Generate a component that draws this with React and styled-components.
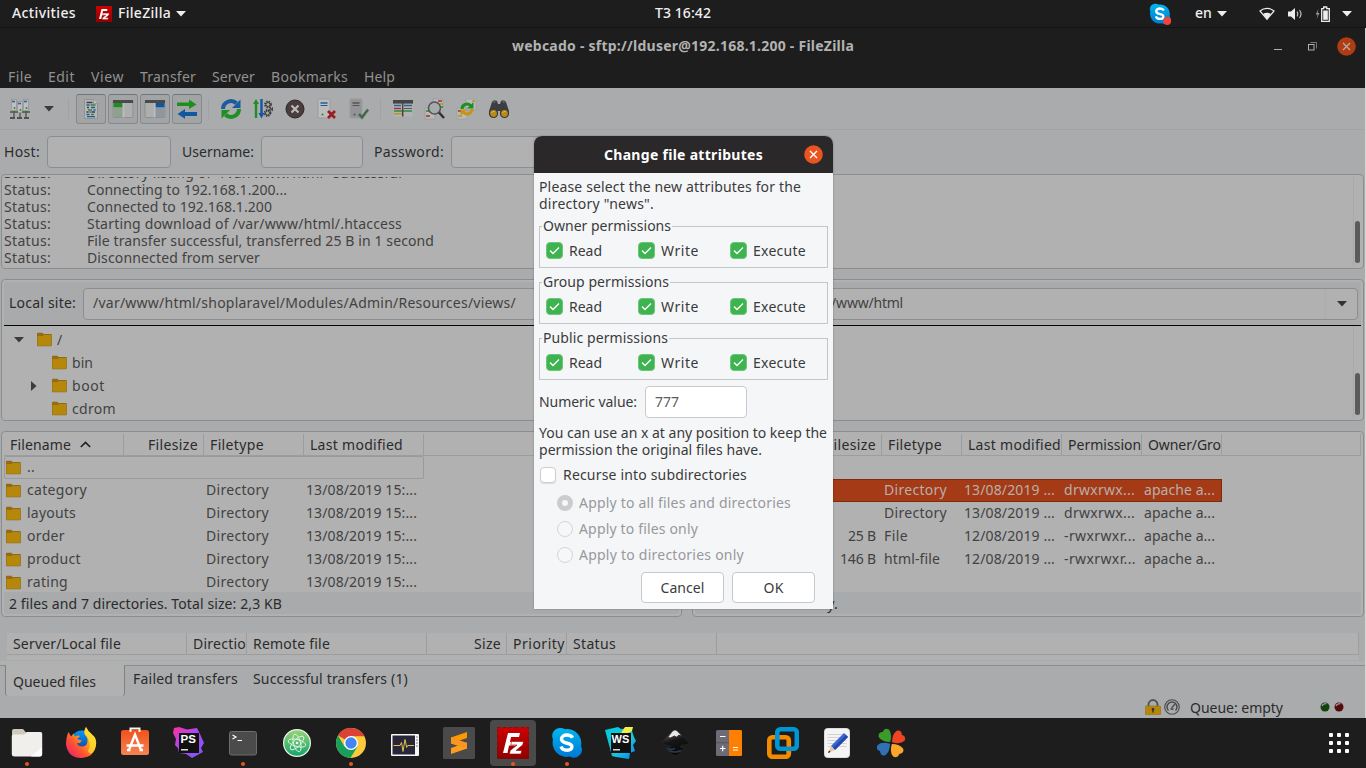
import React, { useLayoutEffect, useRef } from "react";
import styled, { createGlobalStyle, css } from "styled-components";

const c = {
  dark: "#1d1d1d",
  win: "#aaabac",
  field: "#b1b1b1",
  edge: "#8b8e91",
  soft: "#9c9d9e",
  label: "#2b2b2c",
  text: "#424242",
  accent: "#a53a16",
};

const Global = createGlobalStyle`
  * { box-sizing: border-box; }
  body { margin: 0; background: ${c.dark}; overflow: hidden; --rise: 1px; }
  body, button, input { font-family: "Noto Sans", "Open Sans", sans-serif; font-size: 14px; }
  svg { display: block; flex: none; }
`;

/* A run of text tracked so that it fills the given width.
   --rise lifts the baseline inside the 17px line. */
const Run = styled.span`
  display: inline-block;
  flex: none;
  align-self: ${(p) => p.$self || "auto"};
  justify-self: start;
  white-space: pre;
  line-height: calc(17px - 2 * var(--rise));
  padding-bottom: calc(2 * var(--rise));
`;
function Text({ w, self, children }) {
  const ref = useRef(null);
  useLayoutEffect(() => {
    const el = ref.current;
    el.style.letterSpacing = "0px";
    el.style.width = "max-content";
    const natural = el.getBoundingClientRect().width;
    el.style.letterSpacing = `${(w - natural) / String(children).length}px`;
    el.style.width = `${w}px`;
  }, [w, children]);
  return <Run ref={ref} $self={self}>{children}</Run>;
}

const Screen = styled.div`
  position: relative;
  width: 1366px;
  height: 768px;
  display: flex;
  flex-direction: column;
  overflow: hidden;
  background: ${c.dark};
`;

/* ---------- top bar ---------- */
const TopBar = styled.header`
  height: 28px;
  flex: none;
  display: flex;
  align-items: center;
  padding: 0 14px 0 12px;
  background: ${c.dark};
  border-bottom: 1px solid #131313;
  color: #f0f0f0;
  font-weight: 500;
`;
const TopGroup = styled.div`
  display: flex;
  align-items: center;
  flex: ${(p) => p.$grow || "1 1 0"};
  justify-content: ${(p) => p.$justify || "flex-start"};
`;
const Gap = styled.span`
  width: ${(p) => p.$w}px;
  flex: none;
`;
const Caret = ({ color = "#eeeeee", w = 10, h = 6 }) => (
  <svg width={w} height={h} viewBox="0 0 10 6"><path d="M0 0h10L5 5.6z" fill={color} /></svg>
);

const FzIcon = ({ size }) => (
  <svg width={size} height={size} viewBox="0 0 32 32">
    <defs><linearGradient id="fzg" x2="0" y2="1"><stop stopColor="#cc0202" /><stop offset="1" stopColor="#8e0000" /></linearGradient></defs>
    <rect width="32" height="32" fill="url(#fzg)" />
    <rect x=".5" y=".5" width="31" height="31" fill="none" stroke={size > 20 ? "#4a2020" : "#b00000"} strokeWidth="1" strokeDasharray="2 4" />
    <path d="M11 6h12l-1 4h-8l-1 5h7l-1 3.6h-7L10.500 26H6z" fill="#fff" />
    <path d="M14.500 14.500h12l-.7 3.300-6.800 5.700h5.700l-.8 3.500H12.500l.7-3.400 6.800-5.600h-6.200z" fill="#fff" stroke="#a80000" strokeWidth=".6" />
  </svg>
);
const SkypeIcon = ({ size, dot }) => (
  <svg width={size} height={size} viewBox="0 0 32 32">
    <defs><linearGradient id="skg" x2="0" y2="1"><stop stopColor="#00b7f0" /><stop offset="1" stopColor="#0078d4" /></linearGradient></defs>
    <path d="M9 1a8 8 0 0 0-7 11.500 14 14 0 0 0 16.800 17A8 8 0 0 0 30 19 14 14 0 0 0 14 2.300 8 8 0 0 0 9 1z" fill="url(#skg)" />
    <path d="M21.500 10.800c-1-2-3-2.800-5.600-2.800-3 0-5.400 1.400-5.400 4 0 5.600 10.400 3 10.400 7.600 0 2.200-2 3.600-4.900 3.600-3 0-5.200-1.200-6-3.700" fill="none" stroke="#fff" strokeWidth="3.400" />
    {dot && <circle cx="26.500" cy="26" r="6" fill="#f04438" />}
  </svg>
);
const WifiIcon = () => (
  <svg width="16" height="14" viewBox="0 0 16 14">
    <path d="M1 4C5 .5 11 .5 15 4L8 12.300z" fill="none" stroke="#ececec" strokeWidth="1.200" />
    <path d="M4 7c2.400-1.800 5.600-1.800 8 0l-4 5.300z" fill="#ececec" />
  </svg>
);
const VolumeIcon = () => (
  <svg width="16" height="14" viewBox="0 0 16 14">
    <path d="M1 4.500h3L8 1v12L4 9.500H1z" fill="#ececec" />
    <path d="M10 4.700q1.600 2.300 0 4.600M12.500 3q3 4 0 8" fill="none" stroke="#bdbdbd" strokeWidth="1.200" />
  </svg>
);
const BatteryIcon = () => (
  <svg width="16" height="16" viewBox="0 0 16 16">
    <path d="M3.500 3L.7 8.500h2L1.600 13 4.500 7H2.600z" fill="#9a9a9a" />
    <path d="M6.700 2.700h2V1h3v1.700h2.600v12.600H6.700z" fill="none" stroke="#ececec" strokeWidth="1.300" />
    <rect x="8.200" y="4.500" width="4.600" height="9.300" fill="#ececec" />
  </svg>
);

/* ---------- window ---------- */
const Window = styled.main`
  height: 690px;
  flex: none;
  display: flex;
  flex-direction: column;
  background: ${c.win};
  border-right: 1px solid #d6d6d6;
`;
const TitleBar = styled.div`
  height: 36px;
  flex: none;
  display: flex;
  align-items: center;
  padding: 0 9px 0 512px;
  background: ${c.dark};
  color: #b2b2b2;
  font-weight: 700;
`;
const WindowButtons = styled.div`
  margin-left: auto;
  display: flex;
  align-items: center;
`;
const MenuBar = styled.nav`
  height: 24px;
  flex: none;
  display: flex;
  align-items: center;
  gap: 16px;
  padding: 2px 8px 0;
  background: ${c.dark};
  color: #919191;
`;
const Toolbar = styled.div`
  height: 42px;
  flex: none;
  display: flex;
  align-items: center;
  padding-left: 9px;
  border-bottom: 1px solid #a2a3a5;
`;
const ToolSlot = styled.span`
  width: 32px;
  height: 32px;
  flex: none;
  display: flex;
  align-items: center;
  justify-content: center;
`;
const Toggle = styled.button`
  width: 30px;
  height: 30px;
  margin: 0 1px;
  padding: 0;
  flex: none;
  display: flex;
  align-items: center;
  justify-content: center;
  background: #a3a4a6;
  border: 1px solid #868a8e;
  border-top-color: #6f777d;
  border-radius: 3px;
`;
const Divider = styled.span`
  width: 1px;
  height: 20px;
  margin: 0 ${(p) => p.$r}px 0 ${(p) => p.$l}px;
  background: #a1a2a3;
`;
const Quick = styled.div`
  height: 44px;
  flex: none;
  display: flex;
  align-items: center;
  padding-left: 4px;
  color: ${c.label};
`;
const Field = styled.div`
  width: ${(p) => p.$w}px;
  height: 32px;
  margin: 0 ${(p) => p.$r || 0}px 0 ${(p) => p.$l}px;
  flex: none;
  background: ${c.field};
  border: 1px solid ${c.edge};
  border-radius: 4px;
`;
const Panel = styled.section`
  height: ${(p) => p.$h}px;
  min-width: 0;
  width: ${(p) => (p.$w ? `${p.$w}px` : "auto")};
  flex: none;
  display: flex;
  flex-direction: column;
  padding: 2px;
  border: 1px solid ${c.edge};
  border-radius: 4px;
  background: ${c.field};
`;
const LogPanel = styled(Panel)`
  margin-bottom: 10px;
  --rise: 0px;
`;
const LogBody = styled.div`
  flex: 1;
  min-height: 0;
  display: flex;
  justify-content: space-between;
  overflow: hidden;
  color: ${c.text};
`;
const LogLines = styled.div`
  display: flex;
  flex-direction: column;
  justify-content: flex-end;
`;
const LogLine = styled.div`
  height: 17px;
  flex: none;
  display: grid;
  grid-template-columns: 83px auto;
`;
const ScrollTrack = styled.div`
  width: 8px;
  height: 100%;
  display: flex;
  flex-direction: column;
  justify-content: flex-end;
  align-items: center;
  padding-bottom: 3px;
  border-left: 1px solid #a8a8a8;
`;
const ScrollThumb = styled.span`
  width: 5px;
  height: 42px;
  border-radius: 3px;
  background: #5b5b5b;
`;
const Split = styled.div`
  display: flex;
  gap: 10px;
  margin-bottom: 10px;
`;
const Content = styled.div`
  display: flex;
  flex-direction: column;
  flex: none;
  padding: 0 1px;
`;
const SiteBar = styled.div`
  height: 43px;
  flex: none;
  display: flex;
  align-items: center;
  padding: 0 3px 0 5px;
  background: #a9aaab;
  color: ${c.label};
`;
const Combo = styled.div`
  height: 32px;
  flex: 1;
  margin-left: 7px;
  padding-left: ${(p) => p.$pad}px;
  display: flex;
  align-items: center;
  justify-content: space-between;
  background: ${c.field};
  border: 1px solid ${c.edge};
  border-radius: 4px;
  color: ${c.text};
`;
const ComboButton = styled.span`
  width: 32px;
  height: 30px;
  display: flex;
  align-items: center;
  justify-content: center;
  border-left: 1px solid #acadad;
`;
const Tree = styled.div`
  flex: 1;
  min-height: 0;
  display: flex;
  justify-content: space-between;
  border-top: 1px solid #050505;
  color: ${c.text};
  --rise: 0px;
`;
const TreeRows = styled.div`
  padding-top: 2px;
`;
const TreeRow = styled.div`
  height: 23px;
  display: flex;
  align-items: center;
  gap: 5px;
  padding-left: ${(p) => p.$indent}px;
`;
const Twist = styled.span`
  width: 12px;
  margin-right: 7px;
  display: flex;
  justify-content: center;
`;
const Head = styled.div`
  height: 22px;
  flex: none;
  display: flex;
  border-bottom: 1px solid ${c.soft};
  color: ${c.label};
  --rise: 0px;
`;
const HeadCell = styled.div`
  width: ${(p) => p.$w}px;
  flex: none;
  display: flex;
  align-items: center;
  gap: 9px;
  justify-content: ${(p) => (p.$right ? "flex-end" : "flex-start")};
  padding: 0 ${(p) => (p.$right ? 5 : 0)}px 0 6px;
  overflow: hidden;
  border-right: 1px solid ${c.soft};
`;
const HeadFill = styled.div`
  flex: 1;
  border-right: 1px solid ${c.soft};
`;
const Rows = styled.div`
  flex: 1;
  min-height: 0;
  overflow: hidden;
`;
const Row = styled.div`
  width: ${(p) => p.$w}px;
  height: 23px;
  display: flex;
  align-items: center;
  color: ${c.text};
  ${(p) => p.$focus && css`box-shadow: inset 0 0 0 1px #9a9a9a; border-radius: 2px;`}
  ${(p) => p.$selected && css`background: ${c.accent}; color: #b7afab; box-shadow: inset 0 0 0 1px #7e2a10;`}
`;
const Cell = styled.div`
  width: ${(p) => p.$w}px;
  flex: none;
  display: flex;
  align-items: center;
  gap: 6px;
  justify-content: ${(p) => (p.$right ? "flex-end" : "flex-start")};
  padding: 0 ${(p) => (p.$right ? 6 : 0)}px 0 2px;
`;
const PanelStatus = styled.div`
  height: 22px;
  flex: none;
  display: flex;
  align-items: center;
  padding: 2px 0 0 5px;
  background: #a9aaab;
  color: ${c.label};
`;
const Queue = styled.section`
  height: 33px;
  margin-top: 6px;
  flex: none;
  display: flex;
  flex-direction: column;
  border-bottom: 1px solid ${c.edge};
  box-shadow: inset 0 -4px #afb0b0;
`;
const QueueList = styled.div`
  height: 27px;
  margin: 0 6px 0 7px;
  background: ${c.field};
`;
const Tabs = styled.div`
  height: 31px;
  flex: none;
  display: flex;
  align-items: flex-start;
  padding-left: 5px;
  margin-top: -1px;
  color: ${c.label};
`;
const ActiveTab = styled.div`
  width: 120px;
  height: 31px;
  display: flex;
  align-items: center;
  padding: 4px 0 0 7px;
  background: ${c.field};
  border: solid #7d8084;
  border-width: 0 1px;
  border-radius: 0 0 3px 3px;
`;
const Tab = styled.div`
  padding: 4px 0 0 ${(p) => p.$l}px;
`;
const StatusBar = styled.footer`
  height: 20px;
  margin-top: 1px;
  flex: none;
  display: flex;
  align-items: center;
  padding-left: 1145px;
  color: ${c.label};
  --rise: 0px;
`;

const Folder = () => (
  <svg width="15" height="15" viewBox="0 0 15 15">
    <path d="M0 1.500Q0 .8.700.8h4.600l1.200 1.200H14q.8 0 .8.800v10.600q0 .8-.8.800H.8q-.8 0-.8-.8z" fill="#8a6a1c" />
    <path d="M.500 4h5l1.300-1H14.300v10.200q0 .5-.5.500H1q-.5 0-.5-.5z" fill="#b5880b" />
    <path d="M.500 1.500h4.700l1.200 1.200-1.100.9H.5z" fill="#9c6c0c" />
  </svg>
);

/* ---------- toolbar drawings ---------- */
const SiteManagerIcon = () => (
  <svg width="22" height="22" viewBox="0 0 22 22">
    {[[2, 1], [8, 3], [14, 1]].map(([x, y]) => (
      <g key={x}>
        <rect x={x + 0.3} y={y + 0.3} width="5" height="11" fill="#bfbfbf" stroke="#8f9091" strokeWidth=".7" />
        <path d={`M${x + 1} ${y + 2.500}h3`} stroke="#2f66a3" strokeWidth="1.700" />
      </g>
    ))}
    <circle cx="5.500" cy="10" r=".9" fill="#2f8034" /><circle cx="11.500" cy="12" r=".9" fill="#2f8034" /><circle cx="17.500" cy="10" r=".9" fill="#2f8034" />
    <path d="M5 13v6M11 15v4M17 13v6" stroke="#4a4a4a" strokeWidth="1.200" />
    <path d="M1 14h8M13 14h8" stroke="#3f5f42" strokeWidth="1.300" />
    <path d="M1 20h5M8 20h5M15 20h5" stroke="#333" strokeWidth="1.700" />
  </svg>
);
const LogIcon = () => (
  <svg width="20" height="22" viewBox="0 0 20 22">
    <path d="M3.500 1.500h9l4 4v15h-13z" fill="#b5b6b7" stroke="#929394" />
    <path d="M12.500 1.500v4h4" fill="#c7c7c7" stroke="#969798" />
    <path d="M5.500 4.500h6M6 9.500h2M11 14h3M5.500 14h2" stroke="#3e3e3e" strokeWidth="1.400" />
    <path d="M5.500 7h3M10 9.500h4M5.500 16.500h3" stroke="#235c95" strokeWidth="1.400" />
    <path d="M9.500 7h5M7 12h4M10 16.500h3" stroke="#39833d" strokeWidth="1.400" />
    <path d="M12 12h3M8 14h3M6 18.700h8" stroke="#235c95" strokeWidth="1.200" />
  </svg>
);
const PaneIcon = ({ flip }) => (
  <svg width="22" height="20" viewBox="0 0 22 20">
    <g transform={flip ? "translate(22 0) scale(-1 1)" : undefined}>
      <rect x="1" y="1.500" width="20" height="17" rx="1" fill="#adaeae" stroke="#8e8f90" />
      <path d="M1 1h20v3H1z" fill="#4b4b4b" />
      <path d="M1.500 4h9v4.500h-9z" fill={flip ? "#10549b" : "#1f8d1f"} />
      <path d="M1.500 8.500h9V18h-9z" fill={flip ? "#8d979f" : "#8ea08e"} />
      <path d="M11.500 4v14.500" stroke="#bcbcbc" strokeWidth="1.600" />
    </g>
  </svg>
);
const QueueIcon = () => (
  <svg width="20" height="20" viewBox="0 0 20 20">
    <path d="M0 3.500h12V.500L19.500 5.500 12 10V7H0z" fill="#1c901c" />
    <path d="M20 13H8V10L.5 15 8 19.700V17h12z" fill="#1258a0" />
  </svg>
);
const RefreshIcon = () => (
  <svg width="22" height="22" viewBox="0 0 22 22">
    <path d="M3 11a8 8 0 0 1 13.500-5.700" fill="none" stroke="#1c5b9f" strokeWidth="4" />
    <path d="M20.500 1.500V10H12z" fill="#1c5b9f" />
    <path d="M19 11a8 8 0 0 1-13.500 5.700" fill="none" stroke="#1d8f24" strokeWidth="4" />
    <path d="M1.500 20.500V12H10z" fill="#1d8f24" />
  </svg>
);
const Gear = ({ x, y, r }) => (
  <g stroke="#404040" fill="none">
    <circle cx={x} cy={y} r={r} strokeWidth="1.800" strokeDasharray="1.500 .9" />
    <circle cx={x} cy={y} r={r - 1} strokeWidth="1" />
  </g>
);
const ProcessIcon = () => (
  <svg width="20" height="22" viewBox="0 0 20 22">
    <path d="M1.800 20V6H0l3-5 3 5H4.200v14z" fill="#1d8f24" />
    <path d="M7.300 1v14H5.500l3 5.500 3-5.500H9.700V1z" fill="#14579f" />
    <Gear x={15} y={6.500} r={3} />
    <Gear x={14.500} y={15} r={3} />
    <Gear x={18} y={11} r={1.500} />
  </svg>
);
const CancelIcon = () => (
  <svg width="20" height="20" viewBox="0 0 20 20">
    <circle cx="10" cy="10" r="9" fill="#4a3c3d" stroke="#2c2828" />
    <path d="M6.500 6.500l7 7m0-7l-7 7" stroke="#bdb9b9" strokeWidth="2.200" />
  </svg>
);
const ServerIcon = ({ ok }) => (
  <svg width="22" height="22" viewBox="0 0 22 22">
    <rect x="2" y="1" width="12" height="19" rx="1" fill={ok ? "#929495" : "#bcbdbd"} stroke="#9b9c9d" />
    <path d="M4.500 5h7" stroke={ok ? "#555" : "#235c9b"} strokeWidth="1.500" />
    <path d="M4.500 7.500h7" stroke={ok ? "#555" : "#235c9b"} />
    <circle cx="6.500" cy="16.500" r="1" fill={ok ? "#555" : "#2f7e32"} />
    {ok ? <path d="M11 16l3 3.500 6-8" fill="none" stroke="#436848" strokeWidth="2.600" />
      : <path d="M12 13l7 7m0-7l-7 7" stroke="#9a1b24" strokeWidth="2.700" />}
  </svg>
);
const FilterIcon = () => (
  <svg width="20" height="17" viewBox="0 0 20 17">
    <rect x=".5" y=".5" width="19" height="16" fill="#b3b3b3" />
    <path d="M0 1.800h20" stroke="#444" strokeWidth="3.600" />
    <path d="M1 5.500h7M11 5.500h8" stroke="#2d609d" strokeWidth="1.300" />
    <path d="M1 8.500h7" stroke="#a72c2c" strokeWidth="1.400" /><path d="M11 8.500h8" stroke="#555" />
    <path d="M1 11h18" stroke="#318841" strokeWidth="1.500" />
    <path d="M1 13.800h8" stroke="#bb9825" strokeWidth="1.500" />
    <path d="M9.700 3v13.500" stroke="#444" strokeWidth="1.500" />
  </svg>
);
const CompareIcon = () => (
  <svg width="22" height="22" viewBox="0 0 22 22">
    <path d="M9 1h10v12H9zM1 10h10v11H1z" fill="#b9b9b9" stroke="#969696" strokeWidth=".6" />
    <path d="M14 3h4" stroke="#a52e2e" strokeWidth="1.500" /><path d="M15 9h4M2 13h3" stroke="#1d8f24" strokeWidth="1.500" />
    <path d="M16 6h3" stroke="#bd9320" strokeWidth="1.500" /><path d="M2 18h4" stroke="#a52e2e" strokeWidth="1.500" />
    <circle cx="10.500" cy="10" r="6" fill="#a8abad" stroke="#555" strokeWidth="1.600" />
    <path d="M15 14.500l5 5.500" stroke="#333" strokeWidth="2.600" />
  </svg>
);
const SyncIcon = () => (
  <svg width="22" height="22" viewBox="0 0 22 22">
    <path d="M10 1h10v11H10zM1 10h10v11H1z" fill="#b9b9b9" stroke="#999" strokeWidth=".6" />
    <path d="M2 13h3" stroke="#a52e2e" strokeWidth="1.500" /><path d="M2 18h4M16 3h3" stroke="#bd9320" strokeWidth="1.500" />
    <path d="M6 11a5 5 0 0 1 8.500-3.500" fill="none" stroke="#1d8f24" strokeWidth="3" /><path d="M17.500 4v6.500H11z" fill="#1d8f24" />
    <path d="M16 11a5 5 0 0 1-8.500 3.500" fill="none" stroke="#c59411" strokeWidth="3" /><path d="M4.500 18v-6.500H11z" fill="#c59411" />
  </svg>
);
const BinocularsIcon = () => (
  <svg width="22" height="20" viewBox="0 0 22 20">
    <path d="M4 3q2-3 5-1l1 3h2l1-3q3-2 5 1l3 9v4h-8l-1-4h-2l-1 4H1v-4z" fill="#3c3f41" />
    <path d="M5.500 3.500l1.800-1M16.500 3.500l-1.800-1" stroke="#85898b" />
    <circle cx="5.500" cy="14.500" r="4" fill="#b98a16" stroke="#37393a" strokeWidth="1.200" />
    <circle cx="16.500" cy="14.500" r="4" fill="#b98a16" stroke="#37393a" strokeWidth="1.200" />
    <path d="M3.500 14q1-2 3-1.500M14.500 14q1-2 3-1.500" fill="none" stroke="#d8b966" />
  </svg>
);
const CloseIcon = ({ size, bg, fg }) => (
  <svg width={size} height={size} viewBox="0 0 19 19">
    <circle cx="9.500" cy="9.500" r="9.300" fill={bg} />
    <path d="M6 6l7 7m0-7l-7 7" stroke={fg} strokeWidth="1.400" />
  </svg>
);

/* ---------- dialog ---------- */
const Dialog = styled.div`
  position: absolute;
  left: 534px;
  top: 136px;
  width: 299px;
  height: 473px;
  display: flex;
  flex-direction: column;
  border-radius: 8px 8px 0 0;
  overflow: hidden;
  background: #f5f6f8;
  color: #3b3b3b;
  box-shadow: 0 0 2px rgba(0, 0, 0, 0.35);
`;
const DialogTitle = styled.div`
  height: 37px;
  flex: none;
  display: flex;
  align-items: center;
  justify-content: space-between;
  padding: 0 10px 0 70px;
  background: #2b2829;
  color: #ffffff;
  font-weight: 700;
  --rise: 0px;
`;
const DialogBody = styled.div`
  display: flex;
  flex-direction: column;
  padding: 6px 5px 0;
`;
const Paragraph = styled.div`
  display: flex;
  flex-direction: column;
  height: 34px;
`;
const Group = styled.fieldset`
  height: 50px;
  margin: 5px 0 1px;
  padding: 0;
  min-width: 0;
  border: 1px solid #c2c5ca;
  display: block;
`;
const Legend = styled.legend`
  height: 17px;
  margin-left: 2px;
  padding: 0 1px;
  line-height: 15px;
  --rise: 2px;
`;
const Checks = styled.div`
  display: grid;
  grid-template-columns: repeat(3, 92px);
  padding: 7px 0 0 6px;
  --rise: 0px;
`;
const Check = styled.label`
  display: flex;
  align-items: center;
  gap: 6px;
  height: 17px;
`;
const Tick = () => (
  <svg width="17" height="17" viewBox="0 0 17 17">
    <rect x=".5" y=".5" width="16" height="16" rx="3.500" fill="#3eb34f" stroke="#6cc67a" />
    <path d="M4 8.500l3 3 6-6" fill="none" stroke="#fff" strokeWidth="1.300" />
  </svg>
);
const NumericRow = styled.div`
  height: 32px;
  margin: 5px 0 7px;
  display: flex;
  align-items: center;
  gap: 8px;
`;
const NumericInput = styled.div`
  width: 102px;
  height: 32px;
  display: flex;
  align-items: center;
  padding-left: 9px;
  border: 1px solid #c7c9cd;
  border-radius: 4px;
  background: #ffffff;
  color: #5c5c5c;
`;
const EmptyBox = styled.span`
  width: 16px;
  height: 16px;
  border: 1px solid #cfcfcf;
  border-radius: 4px;
  background: #ffffff;
  box-shadow: 0 1px 1px #dddddd;
`;
const RecurseRow = styled.label`
  height: 17px;
  margin: 8px 0 6px 1px;
  display: flex;
  align-items: flex-start;
  gap: 7px;
`;
const RadioRow = styled.label`
  height: 26px;
  display: flex;
  align-items: center;
  gap: 6px;
  padding-left: 18px;
  color: #98999b;
`;
const Radio = styled.span`
  width: 16px;
  height: 16px;
  border-radius: 50%;
  border: ${(p) => (p.$on ? "5px solid #cbccce" : "1px solid #d3d5d7")};
  background: #f6f7f8;
`;
const Buttons = styled.div`
  display: flex;
  gap: 8px;
  margin: 4px 0 0 102px;
  --rise: 0px;
`;
const Button = styled.button`
  width: 83px;
  height: 31px;
  padding: 0;
  display: flex;
  align-items: center;
  justify-content: center;
  border: 1px solid #c6c8cc;
  border-radius: 4px;
  background: #ffffff;
  color: #3b3b3b;
`;

/* ---------- dock ---------- */
const Dock = styled.footer`
  height: 50px;
  flex: none;
  display: flex;
  align-items: stretch;
  background: ${c.dark};
`;
const DockItem = styled.div`
  width: 54px;
  display: flex;
  flex-direction: column;
  align-items: center;
  position: relative;
`;
const DockTile = styled.div`
  width: 46px;
  height: 46px;
  margin-top: 2px;
  flex: none;
  display: flex;
  align-items: center;
  justify-content: center;
  border-radius: 4px;
  background: ${(p) => (p.$active ? "#4a4a4a" : "transparent")};
`;
const RunDot = styled.span`
  position: absolute;
  bottom: 2px;
  width: 4px;
  height: 4px;
  border-radius: 50%;
  background: #ea5424;
`;
const AppsButton = styled.div`
  margin-left: auto;
  padding-right: 17px;
  display: flex;
  align-items: center;
`;

const FilesApp = () => (
  <svg width="32" height="32" viewBox="0 0 32 32">
    <path d="M1 4q0-2 2-2h9l3 3.500h14q2 0 2 2V12H1z" fill="#cfc9bd" />
    <path d="M.800 9q0-1.600 1.600-1.600H13L16 5h13.500q1.700 0 1.700 1.800V27q0 2.500-2.500 2.500h-25Q.8 29.500.8 27z" fill="#f0efec" />
    <path d="M31 20v7q0 2.500-2.500 2.500H20z" fill="#fcfcfb" />
  </svg>
);
const FirefoxApp = () => (
  <svg width="32" height="32" viewBox="0 0 32 32">
    <defs>
      <linearGradient id="ffa" x1="1" x2="0" y1="0" y2="1"><stop stopColor="#fff44f" /><stop offset=".35" stopColor="#ffb01c" /><stop offset=".65" stopColor="#ff5034" /><stop offset="1" stopColor="#e5157d" /></linearGradient>
      <linearGradient id="ffb" x2="0" y2="1"><stop stopColor="#009bf5" /><stop offset="1" stopColor="#21308e" /></linearGradient>
    </defs>
    <circle cx="17" cy="15" r="11.500" fill="url(#ffb)" />
    <path d="M3.500 5l2.500 4.500 2.500-3 1.500 3q3-1.500 5-.5l-3 3q3 1.500 5 1l-2 3h-3q1 4 6 3.500 4-.5 4.500-5 .5-5-3-7.500Q18.500 4 21 0q2 4.500 6 7.500 5 4 4 10.500-1.500 12-14.500 13Q3 31 1 17.500 1 10 3.500 5z" fill="url(#ffa)" />
    <path d="M21 0q2 4.500 6 7.500 5 4 4 10.500-1 5-4 8Q24 27 23 24q3-5 1-11-1.500-3-4-5-1-4 1-8z" fill="#ffdf2f" opacity=".75" />
  </svg>
);
const SoftwareApp = () => (
  <svg width="32" height="32" viewBox="0 0 32 32">
    <defs><linearGradient id="swg" x2="0" y2="1"><stop stopColor="#f1511b" /><stop offset="1" stopColor="#f58453" /></linearGradient></defs>
    <rect x="2" y="3" width="28" height="25" rx="2.500" fill="url(#swg)" />
    <path d="M11.500 5V1.500h9V5" fill="none" stroke="#fff3ea" strokeWidth="2" />
    <path d="M10 23l6-15.500L22 23M7.500 18.500h17M8 23h3.500M20.500 23H24" fill="none" stroke="#fff" strokeWidth="2.400" />
  </svg>
);
const IdeText = styled.text`
  font-family: "Liberation Sans", sans-serif;
  font-weight: 700;
  font-size: ${(p) => p.$size}px;
  fill: #ffffff;
`;
const PhpStormApp = () => (
  <svg width="34" height="34" viewBox="0 0 34 34">
    <defs><linearGradient id="psg" x2="1" y2="1"><stop stopColor="#ff318c" /><stop offset=".4" stopColor="#b345f1" /><stop offset="1" stopColor="#765af8" /></linearGradient></defs>
    <path d="M2 2l5-1 8 2.500L25 2l3 6 4 9-3 5 2 4-11 6-6-4-7-1-1-5-3-3 1-6-3-6z" fill="url(#psg)" />
    <rect x="7" y="7" width="20" height="20" fill="#111" />
    <IdeText x="8.500" y="17" $size={11.500}>PS</IdeText><path d="M9 23.800h7" stroke="#fff" strokeWidth="1.300" />
  </svg>
);
const WebStormApp = () => (
  <svg width="34" height="34" viewBox="0 0 34 34">
    <defs><linearGradient id="wsg" x2="1" y2="1"><stop stopColor="#00cdd7" /><stop offset=".6" stopColor="#18c5dc" /><stop offset="1" stopColor="#087cfa" /></linearGradient></defs>
    <path d="M1 4L14 1l3 2 10-1 3 9 2 4-3 4 2 6-5 2-1 6-13-2-4-1z" fill="url(#wsg)" />
    <path d="M17 7l4-6h8l-1 4-4 2z" fill="#f7ee45" />
    <rect x="7" y="7" width="20" height="20" fill="#111" />
    <IdeText x="7.500" y="16.800" $size={11}>WS</IdeText><path d="M9 23.800h7" stroke="#fff" strokeWidth="1.300" />
  </svg>
);
const TerminalApp = () => (
  <svg width="30" height="30" viewBox="0 0 30 30">
    <rect x="1.500" y="3.500" width="27" height="23.500" rx="2" fill="#4b4b4b" stroke="#6d6d6d" />
    <path d="M4.500 7l3.500 2-3.500 2M9.500 12.500h4.500" fill="none" stroke="#fff" strokeWidth="1.200" />
  </svg>
);
const AtomApp = () => (
  <svg width="30" height="30" viewBox="0 0 30 30">
    <defs><linearGradient id="atg" x2="0" y2="1"><stop stopColor="#9bd577" /><stop offset="1" stopColor="#12a36f" /></linearGradient></defs>
    <circle cx="15" cy="15" r="13.400" fill="url(#atg)" stroke="#e6f4e5" strokeWidth="1.200" />
    <g fill="none" stroke="#e6f8e6" strokeWidth=".9">
      <ellipse cx="15" cy="15" rx="9" ry="3.500" transform="rotate(15 15 15)" />
      <ellipse cx="15" cy="15" rx="9" ry="3.500" transform="rotate(75 15 15)" />
      <ellipse cx="15" cy="15" rx="9" ry="3.500" transform="rotate(135 15 15)" />
    </g>
    <circle cx="15" cy="15" r="1.300" fill="#fff" />
  </svg>
);
const ChromeApp = () => (
  <svg width="32" height="32" viewBox="0 0 32 32">
    <circle cx="16" cy="16" r="15" fill="#fccb3c" />
    <path d="M16 16L3 8.500A15 15 0 0 1 29.500 9.200H16z" fill="#d94335" />
    <path d="M3 8.500A15 15 0 0 0 15.500 31L22.500 19.500 9.500 19.500z" fill="#17a05d" />
    <circle cx="16" cy="16" r="7" fill="#fff" /><circle cx="16" cy="16" r="5.700" fill="#4285f4" />
  </svg>
);
const MonitorApp = () => (
  <svg width="30" height="30" viewBox="0 0 30 30">
    <rect x="1" y="6" width="28" height="22" rx="1" fill="#f6f6f8" />
    <rect x="2.500" y="7.500" width="22.500" height="19" fill="#29263a" />
    <path d="M3.500 17.500H10l1.500-3 1.500 9 2-12 1.700 8 1-2H24" fill="none" stroke="#d9c34b" strokeWidth="1" />
    <path d="M27 8v11" stroke="#999" strokeWidth="1.300" strokeDasharray="2 1" />
  </svg>
);
const SublimeApp = () => (
  <svg width="32" height="32" viewBox="0 0 32 32">
    <rect width="32" height="32" rx="1.500" fill="#4a4a4a" />
    <path d="M24 5v6L8 16.500V10.500z" fill="#ff9800" />
    <path d="M8 10.500L24 16v6L8 16.500z" fill="#e27a08" />
    <path d="M24 15.500v6L8 27v-6z" fill="#ff9d1f" />
    <path d="M8 10.500v6l16 5v-5.500z" fill="#f99522" />
  </svg>
);
const InkscapeApp = () => (
  <svg width="30" height="30" viewBox="0 0 30 30">
    <defs><linearGradient id="ink" x2=".3" y2="1"><stop stopColor="#777" /><stop offset=".5" stopColor="#161616" /><stop offset="1" stopColor="#0a0a0a" /></linearGradient></defs>
    <path d="M15 2q1.500 0 3 1.500L28 13.500q1.500 2-1 3l-6 1q-2 1 0 1.700l4 1.300-4 2q-1 4-5 5-5-.5-5-3.500l-5-3q1-2 5-2.500l-7-2q-3-1.500-1-3.500L12 3.500Q13.500 2 15 2z" fill="url(#ink)" stroke="#2c2c2c" strokeWidth=".5" />
    <path d="M15 2.500q1.500 0 2.500 1.200L21 7.200l-2.500-.4-1.700 2-2.500-1.300-3.800 2L8.500 9l4-5.300q1-1.200 2.500-1.200z" fill="#e9e9e9" />
    <path d="M9 22.500q6 3 12 0M7 20.500q4 1.500 8 0" stroke="#2c3a49" fill="none" strokeWidth="1.500" />
  </svg>
);
const CalcApp = () => (
  <svg width="26" height="26" viewBox="0 0 26 26">
    <rect width="26" height="26" rx="1.500" fill="#6d6b76" />
    <path d="M13 0h11.500Q26 0 26 1.500v23q0 1.500-1.500 1.500H13z" fill="#ff7f02" />
    <path d="M0 12.800h13" stroke="#555" /><path d="M4 6.500h5.500M4 18.500h5.500M6.700 15.800v5.500M17 17.500h5M17 20h5" stroke="#fff" strokeWidth="1.200" />
  </svg>
);
const VmwareApp = () => (
  <svg width="32" height="32" viewBox="0 0 32 32" fill="none" strokeWidth="4.600">
    <rect x="2.300" y="10.300" width="19.500" height="19.500" rx="3" stroke="#f38b00" />
    <rect x="10.300" y="2.300" width="19.500" height="19.500" rx="3" stroke="#0095d3" />
    <path d="M21.800 24v2" stroke="#f38b00" />
  </svg>
);
const EditorApp = () => (
  <svg width="26" height="30" viewBox="0 0 26 30">
    <rect x=".5" y=".5" width="25" height="29" rx="3" fill="#f4f4f5" stroke="#ddd" />
    <path d="M3.500 6.500h19M3.500 9.500h19M3.500 12.500h19M3.500 15.500h19M3.500 18.500h19" stroke="#d2d2d6" />
    <path d="M20 5l4 4L11 22l-4-4z" fill="#3566d6" /><path d="M22 7l2 2L11 22l-2-2z" fill="#2447a8" />
    <path d="M7 18l4 4-7 3z" fill="#e7c6a0" /><path d="M5 22.500l1.700 1.600L4 25z" fill="#222" />
  </svg>
);
const petal = "M14 14.200Q6 15.500 2 11.500 0 7 5 5.700 6 .8 10.500 2 15 5.500 14 14.200z";
const CloverApp = () => (
  <svg width="30" height="30" viewBox="0 0 30 30">
    <g transform="rotate(10 15 15)">
      <path d={petal} fill="#3a9b2b" />
      <path d={petal} fill="#ee4423" transform="rotate(90 15 15)" />
      <path d={petal} fill="#f9a72b" transform="rotate(180 15 15)" />
      <path d={petal} fill="#3070b5" transform="rotate(270 15 15)" />
    </g>
  </svg>
);
const GridIcon = () => (
  <svg width="20" height="20" viewBox="0 0 20 20" fill="#fff">
    {[0, 8, 16].flatMap((y) => [0, 8, 16].map((x) => <rect key={`${x}-${y}`} x={x} y={y} width="4" height="4" rx="1" />))}
  </svg>
);
const LockIcon = () => (
  <svg width="16" height="16" viewBox="0 0 16 16">
    <path d="M3.500 8V5.500a4.500 4.500 0 0 1 9 0V8" fill="none" stroke="#545454" strokeWidth="1.900" />
    <rect x=".3" y="7" width="15.400" height="8.800" rx="1" fill="#b5860b" stroke="#8f6e18" strokeWidth=".6" />
    <path d="M8 9.500v4" stroke="#333" strokeWidth="1.400" /><circle cx="8" cy="10.300" r="1.300" fill="#333" />
  </svg>
);
const GaugeIcon = () => (
  <svg width="16" height="16" viewBox="0 0 16 16" fill="none" stroke="#4a4a4a">
    <circle cx="8" cy="8" r="7.300" strokeWidth="1.100" />
    <path d="M4.500 11.500a5 5 0 1 1 7 0" strokeWidth="1.500" />
    <path d="M7.500 9L11 5M6.500 9.500q1.500 1.500 3 0" strokeWidth="1.200" />
  </svg>
);
const Led = ({ color }) => (
  <svg width="10" height="10" viewBox="0 0 10 10">
    <circle cx="5" cy="5" r="4.500" fill={color} /><path d="M2 4Q3 1.500 6.500 1.700" stroke="#9a9a9a" fill="none" strokeWidth="1.300" />
  </svg>
);

/* ---------- data ---------- */
const menu = [["File", 24], ["Edit", 27], ["View", 33], ["Transfer", 56], ["Server", 43], ["Bookmarks", 77], ["Help", 31]];
const log = [
  ['Directory listing of "/var/www/html" successful', 315],
  ["Connecting to 192.168.1.200...", 200],
  ["Connected to 192.168.1.200", 185],
  ["Starting download of /var/www/html/.htaccess", 315],
  ["File transfer successful, transferred 25 B in 1 second", 347],
  ["Disconnected from server", 173],
];
const localRows = [["category", 60], ["layouts", 49], ["order", 38], ["product", 54], ["rating", 41]];
const remoteRows = [
  { size: null, type: ["Directory", 63], date: "13/08/2019 ...", perm: ["drwxrwx...", 71], selected: true },
  { size: null, type: ["Directory", 63], date: "13/08/2019 ...", perm: ["drwxrwx...", 71] },
  { size: ["25 B", 28], type: ["File", 24], date: "12/08/2019 ...", perm: ["-rwxrwxr...", 72] },
  { size: ["146 B", 36], type: ["html-file", 56], date: "12/08/2019 ...", perm: ["-rwxrwxr...", 72] },
];
const dock = [
  [FilesApp, 1], [FirefoxApp], [SoftwareApp], [PhpStormApp], [TerminalApp, 1], [AtomApp], [ChromeApp, 1], [MonitorApp],
  [SublimeApp], [() => <FzIcon size={32} />, 1, 1], [() => <SkypeIcon size={32} />, 1], [WebStormApp], [InkscapeApp],
  [CalcApp], [VmwareApp], [EditorApp], [CloverApp],
];

function FilePanels() {
  return (
    <Split>
      <Panel $h={186} $w={681}>
        <Head>
          <HeadCell $w={120}>
            <Text w={61}>Filename</Text>
            <svg width="11" height="7" viewBox="0 0 11 7"><path d="M.8 6l4.700-4.500L10.200 6" fill="none" stroke="#222" strokeWidth="1.700" /></svg>
          </HeadCell>
          <HeadCell $w={80} $right><Text w={50}>Filesize</Text></HeadCell>
          <HeadCell $w={100}><Text w={54}>Filetype</Text></HeadCell>
          <HeadCell $w={120}><Text w={93}>Last modified</Text></HeadCell>
          <HeadFill />
        </Head>
        <Rows>
          <Row $w={420} $focus><Cell $w={200}><Folder /><Text w={8}>..</Text></Cell></Row>
          {localRows.map(([name, w]) => (
            <Row key={name} $w={420}>
              <Cell $w={200}><Folder /><Text w={w}>{name}</Text></Cell>
              <Cell $w={100}><Text w={63}>Directory</Text></Cell>
              <Cell $w={120}><Text w={111}>13/08/2019 15:...</Text></Cell>
            </Row>
          ))}
        </Rows>
        <PanelStatus><Text w={273}>2 files and 7 directories. Total size: 2,3 KB</Text></PanelStatus>
      </Panel>
      <Panel $h={186} $w={672}>
        <Head>
          <HeadCell $w={107} />
          <HeadCell $w={80} $right><Text w={50}>Filesize</Text></HeadCell>
          <HeadCell $w={80}><Text w={54}>Filetype</Text></HeadCell>
          <HeadCell $w={100}><Text w={93}>Last modified</Text></HeadCell>
          <HeadCell $w={80}><Text w={80}>Permissions</Text></HeadCell>
          <HeadCell $w={80}><Text w={90}>Owner/Group</Text></HeadCell>
          <HeadFill />
        </Head>
        <Rows>
          <Row $w={527} />
          {remoteRows.map((r, i) => (
            <Row key={i} $w={527} $selected={r.selected}>
              <Cell $w={187} $right>{r.size && <Text w={r.size[1]}>{r.size[0]}</Text>}</Cell>
              <Cell $w={80}><Text w={r.type[1]}>{r.type[0]}</Text></Cell>
              <Cell $w={100}><Text w={91}>{r.date}</Text></Cell>
              <Cell $w={80}><Text w={r.perm[1]}>{r.perm[0]}</Text></Cell>
              <Cell $w={80}><Text w={71}>apache a...</Text></Cell>
            </Row>
          ))}
        </Rows>
        <PanelStatus><Text w={138}>Selected 1 directory.</Text></PanelStatus>
      </Panel>
    </Split>
  );
}

function AttributesDialog() {
  return (
    <Dialog role="dialog">
      <DialogTitle>
        <Text w={159}>Change file attributes</Text>
        <CloseIcon size={19} bg="#e95420" fg="#fff" />
      </DialogTitle>
      <DialogBody>
        <Paragraph>
          <Text self="flex-start" w={262}>Please select the new attributes for the</Text>
          <Text self="flex-start" w={115}>directory "news".</Text>
        </Paragraph>
        {[["Owner permissions", 128], ["Group permissions", 126], ["Public permissions", 125]].map(([name, w]) => (
          <Group key={name}>
            <Legend><Text w={w}>{name}</Text></Legend>
            <Checks>
              <Check><Tick /><Text w={33}>Read</Text></Check>
              <Check><Tick /><Text w={38}>Write</Text></Check>
              <Check><Tick /><Text w={53}>Execute</Text></Check>
            </Checks>
          </Group>
        ))}
        <NumericRow>
          <Text w={98}>Numeric value:</Text>
          <NumericInput><Text w={24}>777</Text></NumericInput>
        </NumericRow>
        <Paragraph>
          <Text self="flex-start" w={288}>You can use an x at any position to keep the</Text>
          <Text self="flex-start" w={223}>permission the original files have.</Text>
        </Paragraph>
        <RecurseRow><EmptyBox /><Text w={184}>Recurse into subdirectories</Text></RecurseRow>
        <RadioRow><Radio $on /><Text w={212}>Apply to all files and directories</Text></RadioRow>
        <RadioRow><Radio /><Text w={119}>Apply to files only</Text></RadioRow>
        <RadioRow><Radio /><Text w={165}>Apply to directories only</Text></RadioRow>
        <Buttons>
          <Button><Text w={44}>Cancel</Text></Button>
          <Button><Text w={20}>OK</Text></Button>
        </Buttons>
      </DialogBody>
    </Dialog>
  );
}

export default function App() {
  return (
    <Screen>
      <Global />
      <TopBar>
        <TopGroup $grow="0 0 643px">
          <Text w={64}>Activities</Text><Gap $w={20} />
          <FzIcon size={16} /><Gap $w={6} />
          <Text w={53}>FileZilla</Text><Gap $w={5} /><Caret />
        </TopGroup>
        <Text w={56}>T3 16:42</Text>
        <TopGroup $justify="flex-end">
          <SkypeIcon size={22} dot /><Gap $w={24} />
          <Text w={17}>en</Text><Gap $w={5} /><Caret /><Gap $w={32} />
          <WifiIcon /><Gap $w={12} /><VolumeIcon /><Gap $w={12} /><BatteryIcon /><Gap $w={11} /><Caret />
        </TopGroup>
      </TopBar>
      <Window>
        <TitleBar>
          <Text w={342}>webcado - sftp://lduser@192.168.1.200 - FileZilla</Text>
          <WindowButtons>
            <svg width="9" height="9" viewBox="0 0 9 9"><path d="M0 7.500h8" stroke="#b0b0b0" /></svg>
            <Gap $w={25} />
            <svg width="9" height="9" viewBox="0 0 9 9" fill="none"><path d="M2.500.5h6v6" stroke="#777" /><rect x=".5" y="2.500" width="5.500" height="5.500" stroke="#b0b0b0" /></svg>
            <Gap $w={20} />
            <CloseIcon size={19} bg="#b03c14" fg="#b9a9a2" />
          </WindowButtons>
        </TitleBar>
        <MenuBar>{menu.map(([m, w]) => <Text key={m} w={w}>{m}</Text>)}</MenuBar>
        <Toolbar>
          <SiteManagerIcon /><Gap $w={13} /><Caret color="#3b3b3b" /><Divider $l={14} $r={6} />
          <Toggle><LogIcon /></Toggle><Toggle><PaneIcon /></Toggle><Toggle><PaneIcon flip /></Toggle><Toggle><QueueIcon /></Toggle>
          <Divider $l={5} $r={6} />
          <ToolSlot><RefreshIcon /></ToolSlot><ToolSlot><ProcessIcon /></ToolSlot><ToolSlot><CancelIcon /></ToolSlot>
          <ToolSlot><ServerIcon /></ToolSlot><ToolSlot><ServerIcon ok /></ToolSlot>
          <Divider $l={5} $r={6} />
          <ToolSlot><FilterIcon /></ToolSlot><ToolSlot><CompareIcon /></ToolSlot><ToolSlot><SyncIcon /></ToolSlot><ToolSlot><BinocularsIcon /></ToolSlot>
        </Toolbar>
        <Quick>
          <Text w={36}>Host:</Text><Field $w={124} $l={7} $r={11} />
          <Text w={72}>Username:</Text><Field $w={102} $l={7} $r={11} />
          <Text w={70}>Password:</Text><Field $w={102} $l={7} />
        </Quick>
        <Content>
          <LogPanel $h={95}>
            <LogBody>
              <LogLines>
                {log.map(([t, w]) => <LogLine key={t}><Text w={47}>Status:</Text><Text w={w}>{t}</Text></LogLine>)}
              </LogLines>
              <ScrollTrack><ScrollThumb /></ScrollTrack>
            </LogBody>
          </LogPanel>
          <Split>
            <Panel $h={142} $w={681}>
              <SiteBar>
                <Text w={67}>Local site:</Text>
                <Combo $pad={9}><Text w={423}>/var/www/html/shoplaravel/Modules/Admin/Resources/views/</Text><ComboButton><Caret color="#333" /></ComboButton></Combo>
              </SiteBar>
              <Tree>
                <TreeRows>
                  <TreeRow $indent={9}><Twist><Caret color="#3c3c3c" /></Twist><Folder /><Text w={6}>/</Text></TreeRow>
                  <TreeRow $indent={48}><Folder /><Text w={21}>bin</Text></TreeRow>
                  <TreeRow $indent={24}><Twist><svg width="6" height="10" viewBox="0 0 6 10"><path d="M0 0v10l5.500-5z" fill="#3c3c3c" /></svg></Twist><Folder /><Text w={33}>boot</Text></TreeRow>
                  <TreeRow $indent={48}><Folder /><Text w={44}>cdrom</Text></TreeRow>
                </TreeRows>
              </Tree>
            </Panel>
            <Panel $h={142} $w={672}>
              <SiteBar>
                <Text w={83}>Remote site:</Text>
                <Combo $pad={15}><Text w={97}>/var/www/html</Text><ComboButton><Caret color="#333" /></ComboButton></Combo>
              </SiteBar>
              <Tree><TreeRows /><ScrollTrack><ScrollThumb /></ScrollTrack></Tree>
            </Panel>
          </Split>
          <FilePanels />
        </Content>
        <Queue>
          <QueueList>
            <Head>
              <HeadCell $w={180}><Text w={108}>Server/Local file</Text></HeadCell>
              <HeadCell $w={60}><Text w={62}>Direction</Text></HeadCell>
              <HeadCell $w={180}><Text w={77}>Remote file</Text></HeadCell>
              <HeadCell $w={80} $right><Text w={27}>Size</Text></HeadCell>
              <HeadCell $w={60}><Text w={52}>Priority</Text></HeadCell>
              <HeadCell $w={150}><Text w={43}>Status</Text></HeadCell>
              <HeadFill />
            </Head>
          </QueueList>
        </Queue>
        <Tabs>
          <ActiveTab><Text w={83}>Queued files</Text></ActiveTab>
          <Tab $l={8}><Text w={105}>Failed transfers</Text></Tab>
          <Tab $l={15}><Text w={155}>Successful transfers (1)</Text></Tab>
        </Tabs>
        <StatusBar>
          <LockIcon /><Gap $w={3} /><GaugeIcon /><Gap $w={10} />
          <Text w={93}>Queue: empty</Text><Gap $w={37} />
          <Led color="#12420f" /><Gap $w={4} /><Led color="#560b0b" />
        </StatusBar>
      </Window>
      <Dock>
        {dock.map(([Icon, running, active], i) => (
          <DockItem key={i}>
            <DockTile $active={active}><Icon /></DockTile>
            {running && <RunDot />}
          </DockItem>
        ))}
        <AppsButton><GridIcon /></AppsButton>
      </Dock>
      <AttributesDialog />
    </Screen>
  );
}
